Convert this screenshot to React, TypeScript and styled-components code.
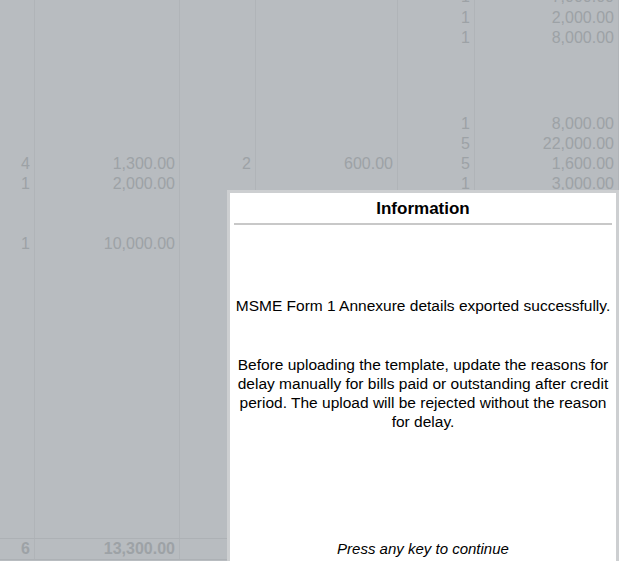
import styled, { createGlobalStyle } from 'styled-components'

const GlobalStyle = createGlobalStyle`
  html, body {
    margin: 0;
    padding: 0;
    background: #b8bcc0;
    overflow: hidden;
  }
  body {
    font-family: "Liberation Sans", Arial, sans-serif;
  }
`

const Screen = styled.div`
  position: relative;
  width: 619px;
  height: 561px;
  overflow: hidden;
  background: #b8bcc0;
`

const Table = styled.div`
  display: flex;
  flex-direction: column;
  margin-top: -13px;
`

const Row = styled.div<{ $h?: number; $total?: boolean }>`
  display: grid;
  grid-template-columns: 35px 145px 76px 142px 77px 144px;
  height: ${(p) => p.$h ?? 20}px;
  font-size: 16px;
  font-weight: ${(p) => (p.$total ? 'bold' : 'normal')};
  color: #9da2a6;
  border-top: ${(p) => (p.$total ? '1px solid #adb1b5' : 'none')};
  border-bottom: ${(p) => (p.$total ? '1px solid #adb1b5' : 'none')};
  box-sizing: border-box;
`

const Cell = styled.div`
  display: flex;
  align-items: center;
  justify-content: flex-end;
  padding-right: 4px;
  border-right: 1px solid #b0b4b8;
  white-space: nowrap;
  line-height: 1;
`

const Dialog = styled.div`
  position: absolute;
  left: 227px;
  top: 190px;
  width: 392px;
  height: 371px;
  box-sizing: border-box;
  background: #ffffff;
  border: 3px solid #cdcfd1;
  border-bottom: none;
  display: flex;
  flex-direction: column;
  align-items: center;
  color: #000;
`

const Title = styled.div`
  font-weight: bold;
  font-size: 17px;
  padding-top: 6px;
  height: 24px;
  text-align: center;
`

const Rule = styled.div`
  width: 378px;
  height: 2px;
  background: #c8c8c8;
`

const Message = styled.p<{ $top: number; $nowrap?: boolean }>`
  margin: ${(p) => p.$top}px 0 0;
  font-size: 15.5px;
  line-height: 19px;
  text-align: center;
  width: 376px;
  white-space: ${(p) => (p.$nowrap ? 'nowrap' : 'normal')};
`

const Hint = styled.div`
  margin-top: auto;
  margin-bottom: 3px;
  font-style: italic;
  font-size: 15px;
  line-height: 19px;
`

type R = { c: string[]; h?: number; total?: boolean }

const rows: R[] = [
  { c: ['', '', '', '', '1', '7,000.00'] },
  { c: ['', '', '', '', '1', '2,000.00'], h: 21 },
  { c: ['', '', '', '', '1', '8,000.00'] },
  { c: ['', '', '', '', '', ''], h: 66 },
  { c: ['', '', '', '', '1', '8,000.00'] },
  { c: ['', '', '', '', '5', '22,000.00'] },
  { c: ['4', '1,300.00', '2', '600.00', '5', '1,600.00'] },
  { c: ['1', '2,000.00', '', '', '1', '3,000.00'] },
  { c: ['', '', '', '', '', ''], h: 40 },
  { c: ['1', '10,000.00', '', '', '', ''] },
  { c: ['', '', '', '', '', ''], h: 284 },
  { c: ['6', '13,300.00', '', '', '', ''], h: 22, total: true },
]

export default function App() {
  return (
    <>
      <GlobalStyle />
      <Screen>
        <Table>
          {rows.map((r, i) => (
            <Row key={i} $h={r.h} $total={r.total}>
              {r.c.map((v, j) => (
                <Cell key={j}>{v}</Cell>
              ))}
            </Row>
          ))}
        </Table>
        <Dialog>
          <Title>Information</Title>
          <Rule />
          <Message $top={71} $nowrap>
            MSME Form 1 Annexure details exported successfully.
          </Message>
          <Message $top={40}>
            Before uploading the template, update the reasons for delay manually for bills paid or
            outstanding after credit period. The upload will be rejected without the reason for
            delay.
          </Message>
          <Hint>Press any key to continue</Hint>
        </Dialog>
      </Screen>
    </>
  )
}
